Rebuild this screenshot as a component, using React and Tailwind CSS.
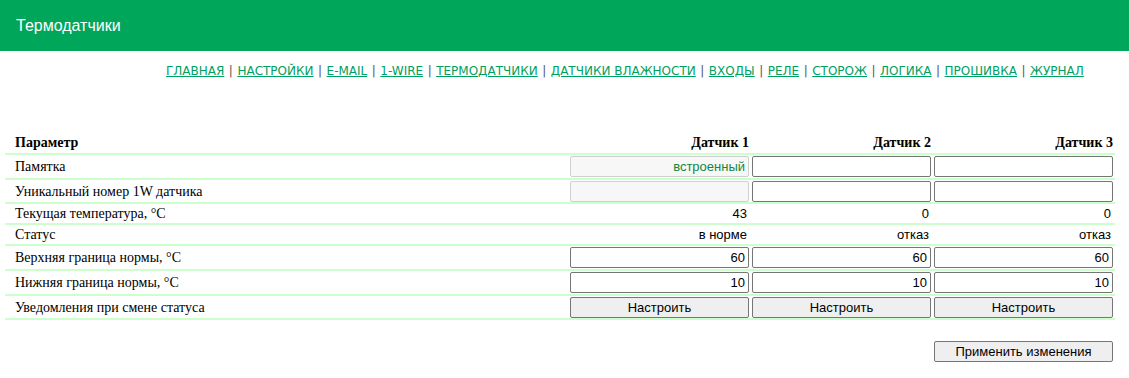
import { Fragment } from "react";

const navLinks = [
  "ГЛАВНАЯ",
  "НАСТРОЙКИ",
  "E-MAIL",
  "1-WIRE",
  "ТЕРМОДАТЧИКИ",
  "ДАТЧИКИ ВЛАЖНОСТИ",
  "ВХОДЫ",
  "РЕЛЕ",
  "СТОРОЖ",
  "ЛОГИКА",
  "ПРОШИВКА",
  "ЖУРНАЛ",
];

const inputCls =
  "w-[179px] h-[21px] px-[3px] border border-[#767676] rounded-[2px] bg-white text-right text-[13px] font-['Liberation_Sans',sans-serif] text-black outline-none";

const buttonCls =
  "w-[179px] h-[21px] border border-[#767676] rounded-[2px] bg-[#efefef] text-[13px] font-['Liberation_Sans',sans-serif] text-black";

const Cell = ({ children }) => (
  <div className="w-[182px] pr-[2px] flex justify-end items-center">{children}</div>
);

const TextCell = ({ children }) => (
  <div className="w-[182px] pr-[4px] text-right text-[13px] font-['Liberation_Sans',sans-serif] text-black">
    {children}
  </div>
);

const Row = ({ label, h = "h-[25px]", children }) => (
  <div className={`flex items-center border-b-2 border-[#ccffcc] ${h}`}>
    <div className="flex-1 pl-[10px] text-[14px]">{label}</div>
    {children}
  </div>
);

export default function App() {
  return (
    <div className="w-[1129px] h-[378px] bg-white font-['Liberation_Serif',serif] text-black">
      {/* Header */}
      <div className="h-[51px] bg-[#00a65a] flex items-center pl-[16px]">
        <span className="text-white text-[16px] font-['Liberation_Sans',sans-serif]">
          Термодатчики
        </span>
      </div>

      {/* Navigation */}
      <div className="pl-[166px] pt-[11px] h-[84px] text-[12px] font-['DejaVu_Sans',sans-serif] whitespace-nowrap">
        {navLinks.map((l, i) => (
          <Fragment key={l}>
            {i > 0 && <span className="text-[#555] px-[4.5px]">|</span>}
            <a href="#" className="text-[#00a060] underline">
              {l}
            </a>
          </Fragment>
        ))}
      </div>

      {/* Table */}
      <div className="ml-[5px] w-[1110px]">
        <div className="flex items-end h-[20px] border-b-2 border-[#ccffcc] font-bold text-[14px]">
          <div className="flex-1 pl-[10px]">Параметр</div>
          <div className="w-[182px] pr-[2px] text-right">Датчик 1</div>
          <div className="w-[182px] pr-[2px] text-right">Датчик 2</div>
          <div className="w-[182px] pr-[2px] text-right">Датчик 3</div>
        </div>

        <Row label="Памятка">
          <Cell>
            <input
              disabled
              defaultValue="встроенный"
              className="w-[179px] h-[21px] px-[3px] border border-[#d0d0d0] rounded-[2px] bg-[#f7f7f7] text-right text-[13px] font-['Liberation_Sans',sans-serif] text-[#118844]"
            />
          </Cell>
          <Cell>
            <input className={inputCls} />
          </Cell>
          <Cell>
            <input className={inputCls} />
          </Cell>
        </Row>

        <Row label="Уникальный номер 1W датчика" h="h-[24px]">
          <Cell>
            <input
              disabled
              className="w-[179px] h-[21px] border border-[#d0d0d0] rounded-[2px] bg-[#f7f7f7]"
            />
          </Cell>
          <Cell>
            <input className={inputCls} />
          </Cell>
          <Cell>
            <input className={inputCls} />
          </Cell>
        </Row>

        <Row label="Текущая температура, °C" h="h-[21px]">
          <TextCell>43</TextCell>
          <TextCell>0</TextCell>
          <TextCell>0</TextCell>
        </Row>

        <Row label="Статус" h="h-[21px]">
          <TextCell>в норме</TextCell>
          <TextCell>отказ</TextCell>
          <TextCell>отказ</TextCell>
        </Row>

        <Row label="Верхняя граница нормы, °C">
          {["60", "60", "60"].map((v, i) => (
            <Cell key={i}>
              <input defaultValue={v} className={inputCls} />
            </Cell>
          ))}
        </Row>

        <Row label="Нижняя граница нормы, °C">
          {["10", "10", "10"].map((v, i) => (
            <Cell key={i}>
              <input defaultValue={v} className={inputCls} />
            </Cell>
          ))}
        </Row>

        <Row label="Уведомления при смене статуса" h="h-[24px]">
          {[0, 1, 2].map((i) => (
            <Cell key={i}>
              <button className={buttonCls}>Настроить</button>
            </Cell>
          ))}
        </Row>

        <div className="flex justify-end pt-[21px] pr-[2px]">
          <button className={buttonCls}>Применить изменения</button>
        </div>
      </div>
    </div>
  );
}
